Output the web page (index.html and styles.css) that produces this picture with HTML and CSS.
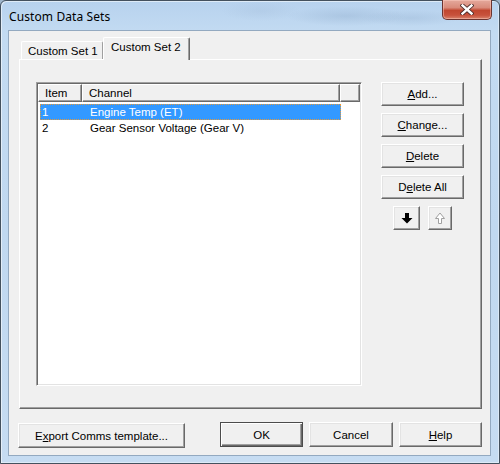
FILE: index.html
```html
<!DOCTYPE html>
<html>
<head>
<meta charset="utf-8">
<link rel="stylesheet" href="styles.css">
</head>
<body>
<div class="window">
  <div class="titlebar">
    <span class="title">Custom Data Sets</span>
    <div class="close">
      <svg width="14" height="11" viewBox="0 0 14 11">
        <path d="M2.5 1.5 L11.5 9.5 M11.5 1.5 L2.5 9.5" stroke="#4a2a28" stroke-width="4.2" stroke-linecap="square"/>
        <path d="M2.5 1.5 L11.5 9.5 M11.5 1.5 L2.5 9.5" stroke="#ffffff" stroke-width="2.4" stroke-linecap="square"/>
      </svg>
    </div>
  </div>
  <div class="client">
    <div class="tabs">
      <div class="tab">Custom Set 1</div>
      <div class="tab active">Custom Set 2</div>
    </div>
    <div class="panel">
      <div class="list">
        <div class="header">
          <div class="hcell item">Item</div>
          <div class="hcell channel">Channel</div>
          <div class="hcell filler"></div>
        </div>
        <div class="row selected"><span class="c1">1</span><span class="c2">Engine Temp (ET)</span></div>
        <div class="row"><span class="c1">2</span><span class="c2">Gear Sensor Voltage (Gear V)</span></div>
      </div>
      <div class="side">
        <div class="btn"><u>A</u>dd...</div>
        <div class="btn"><u>C</u>hange...</div>
        <div class="btn"><u>D</u>elete</div>
        <div class="btn">D<u>e</u>lete All</div>
        <div class="arrows">
          <div class="btn arrow down">
            <svg width="12" height="12" viewBox="0 0 12 12"><path d="M4 1h4v5h3.5L6 11.5 0.5 6H4z" fill="#000"/></svg>
          </div>
          <div class="btn arrow up">
            <svg width="12" height="12" viewBox="0 0 12 12"><path d="M4.5 11.5h3v-5h3L6 1 1.5 6.5h3z" fill="#fff" stroke="#a0a0a0" stroke-width="1"/></svg>
          </div>
        </div>
      </div>
    </div>
    <div class="bottom">
      <div class="btn export">E<u>x</u>port Comms template...</div>
      <div class="group">
        <div class="btn default">OK</div>
        <div class="btn">Cancel</div>
        <div class="btn"><u>H</u>elp</div>
      </div>
    </div>
  </div>
</div>
</body>
</html>
```
FILE: styles.css
```css
html, body {
  margin: 0;
  padding: 0;
}
body {
  width: 500px;
  height: 464px;
  overflow: hidden;
  background: #9fb6cc;
  font-family: "Liberation Sans", Arial, sans-serif;
  font-size: 11.5px;
  color: #000;
}
.window {
  box-sizing: border-box;
  width: 500px;
  height: 464px;
  border: 1px solid #44515e;
  border-radius: 6px 6px 0 0;
  padding: 0 8px 7px 7px;
  display: flex;
  flex-direction: column;
  background:
    radial-gradient(ellipse 60px 10px at 345px 15px, rgba(120,150,185,0.25), transparent),
    radial-gradient(ellipse 50px 8px at 410px 17px, rgba(120,150,185,0.2), transparent),
    radial-gradient(ellipse 40px 10px at 260px 10px, rgba(150,175,205,0.2), transparent),
    linear-gradient(180deg, #b7d2ee 0%, #c3dbf2 7%, #c0d8f0 50%, #c6dcf2 100%);
  box-shadow: inset 1px 1px 0 rgba(255,255,255,0.55), inset -1px -1px 0 rgba(255,255,255,0.4);
}
.titlebar {
  height: 30px;
  display: flex;
  align-items: flex-start;
}
.title {
  font-family: "Noto Sans", "Open Sans", sans-serif;
  font-size: 12px;
  color: #000;
  padding-left: 1px;
  margin-top: 7px;
  letter-spacing: 0.1px;
}
.close {
  margin-left: auto;
  margin-right: -1px;
  margin-top: -1px;
  width: 50px;
  height: 20px;
  box-sizing: border-box;
  border: 1px solid #6b3430;
  border-top: none;
  border-radius: 0 0 5px 5px;
  background: linear-gradient(180deg, #e4a99c 0%, #d98b7b 40%, #c14730 55%, #c8523c 80%, #d9836c 100%);
  box-shadow: inset 0 0 0 1px rgba(255,210,200,0.45);
  display: flex;
  align-items: center;
  justify-content: center;
}
.client {
  flex: 1;
  box-sizing: border-box;
  border: 1px solid #93a9c0;
  background: #f0f0f0;
  padding: 6px 8px 7px 10px;
  display: flex;
  flex-direction: column;
}
.tabs {
  height: 22px;
  display: flex;
  align-items: flex-end;
  position: relative;
  z-index: 1;
}
.tab {
  box-sizing: border-box;
  height: 18px;
  width: 82px;
  margin-left: 2px;
  border-top: 1px solid #fff;
  border-left: 1px solid #fff;
  border-right: 1px solid #a0a0a0;
  border-radius: 2px 2px 0 0;
  background: #f0f0f0;
  padding: 3px 0 0 6px;
  white-space: nowrap;
}
.tab.active {
  margin-left: 0;
  width: 87px;
  height: 23px;
  margin-bottom: -1px;
  padding: 3px 0 0 7px;
  border-right: 1px solid #696969;
  box-shadow: inset -1px 0 0 #a0a0a0;
}
.panel {
  box-sizing: border-box;
  height: 350px;
  border: 1px solid;
  border-color: #fff #696969 #696969 #fff;
  box-shadow: inset -1px -1px 0 #a0a0a0;
  padding: 22px 0 0 16px;
  display: flex;
  align-items: flex-start;
  gap: 19px;
}
.list {
  box-sizing: border-box;
  width: 326px;
  height: 304px;
  background: #fff;
  border: 1px solid;
  border-color: #a0a0a0 #fff #fff #a0a0a0;
  box-shadow: inset 1px 1px 0 #696969, inset -1px -1px 0 #e3e3e3;
  padding: 1px;
}
.header {
  display: flex;
  height: 18px;
}
.hcell {
  box-sizing: border-box;
  height: 18px;
  background: #f0f0f0;
  border: 1px solid;
  border-color: #fff #696969 #696969 #fff;
  box-shadow: inset -1px -1px 0 #a0a0a0;
  padding: 2px 0 0 6px;
}
.hcell.item { width: 44px; }
.hcell.channel { width: 258px; }
.hcell.filler { flex: 1; }
.row {
  margin-left: 2px;
  width: 301px;
  height: 16px;
  display: flex;
  align-items: center;
  box-sizing: border-box;
}
.row:first-of-type { margin-top: 0; }
.header + .row { margin-top: 2px; }
.row .c1 { width: 42px; padding-left: 2px; box-sizing: border-box; }
.row .c2 { padding-left: 8px; }
.row.selected {
  background: #3399ff;
  color: #fff;
  outline: 1px dotted #e59a3a;
  outline-offset: -1px;
}
.side {
  width: 83px;
  display: flex;
  flex-direction: column;
  gap: 7px;
}
.btn {
  box-sizing: border-box;
  height: 24px;
  background: #f0f0f0;
  border: 1px solid;
  border-color: #fff #696969 #696969 #fff;
  box-shadow: inset -1px -1px 0 #a0a0a0, inset 1px 1px 0 #e3e3e3;
  display: flex;
  align-items: center;
  justify-content: center;
  white-space: nowrap;
}
.arrows {
  display: flex;
  gap: 8px;
  padding-left: 12px;
}
.btn.arrow { height: 24px; }
.btn.down { width: 27px; }
.btn.up { width: 24px; }
.bottom {
  margin-top: 13px;
  display: flex;
  justify-content: space-between;
}
.bottom .btn { height: 25px; }
.btn.export {
  width: 167px;
  margin-left: -1px;
  margin-top: 1px;
}
.group {
  display: flex;
  gap: 6px;
}
.group .btn { width: 83px; }
.group .btn:nth-child(2) { width: 84px; }
.btn.default {
  border: 1px solid #4c4c4c;
  box-shadow: inset 1px 1px 0 #fff, inset -1px -1px 0 #696969, inset -2px -2px 0 #a0a0a0;
}
```
